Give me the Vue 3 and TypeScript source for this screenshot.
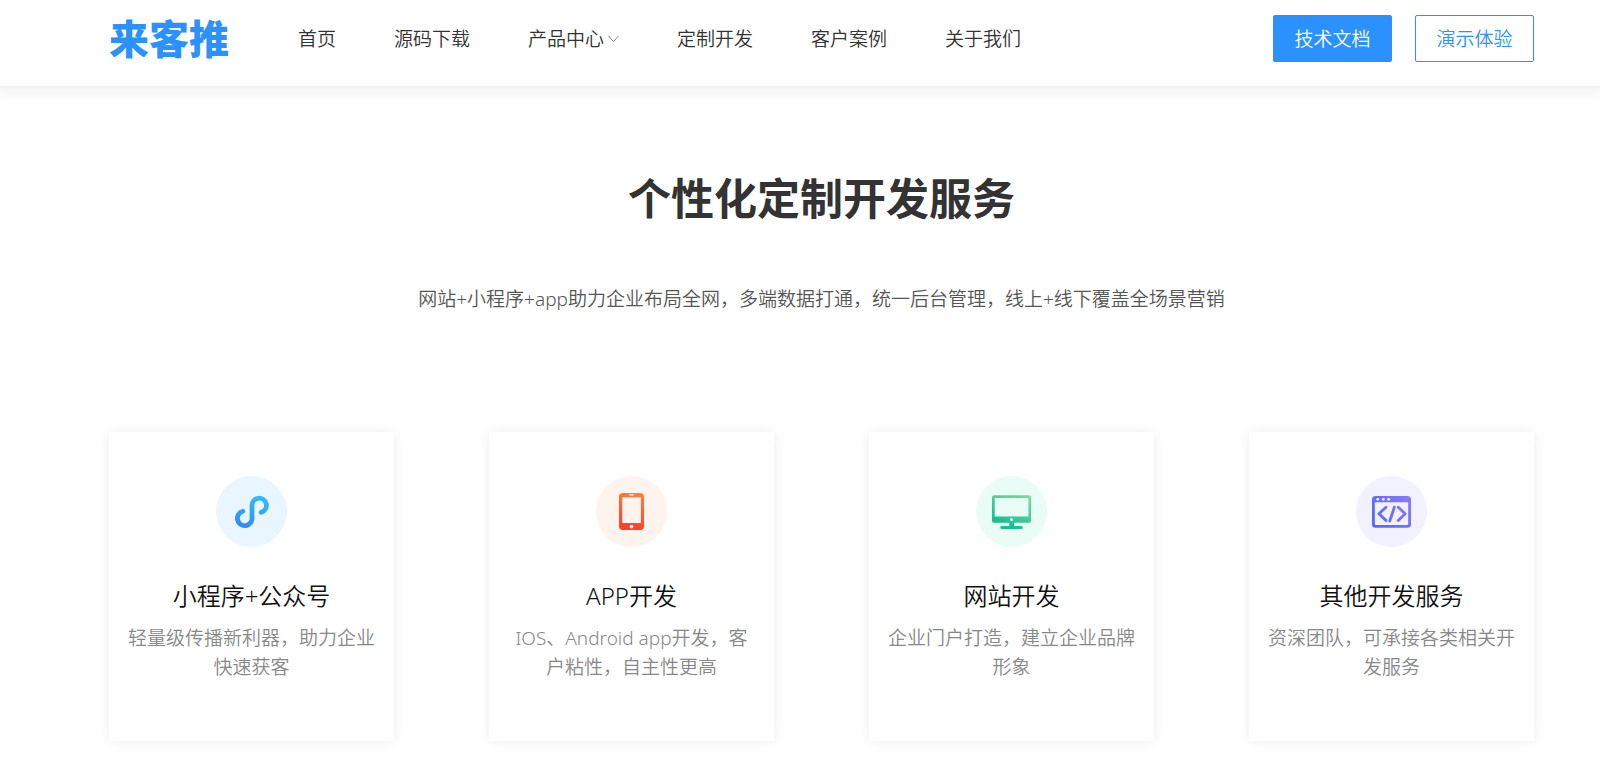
<script setup lang="ts">
interface NavItem {
  label: string
  hasMenu?: boolean
}

interface Service {
  icon: 'mini' | 'phone' | 'web' | 'code'
  title: string
  text: string
}

const navItems: NavItem[] = [
  { label: '首页' },
  { label: '源码下载' },
  { label: '产品中心', hasMenu: true },
  { label: '定制开发' },
  { label: '客户案例' },
  { label: '关于我们' },
]

const services: Service[] = [
  { icon: 'mini', title: '小程序+公众号', text: '轻量级传播新利器，助力企业快速获客' },
  { icon: 'phone', title: 'APP开发', text: 'IOS、Android app开发，客户粘性，自主性更高' },
  { icon: 'web', title: '网站开发', text: '企业门户打造，建立企业品牌形象' },
  { icon: 'code', title: '其他开发服务', text: '资深团队，可承接各类相关开发服务' },
]
</script>

<template>
  <div class="page">
    <header class="header">
      <a class="logo" href="#">来客推</a>
      <nav class="nav">
        <a v-for="item in navItems" :key="item.label" class="nav-link" href="#">
          {{ item.label }}
          <svg v-if="item.hasMenu" class="chevron" viewBox="0 0 11 8" aria-hidden="true">
            <path d="M0.4 0.8 L5.5 6.6 L10.6 0.8" fill="none" stroke="#888" stroke-width="1" />
          </svg>
        </a>
      </nav>
      <div class="actions">
        <button class="btn btn-solid" type="button">技术文档</button>
        <button class="btn btn-outline" type="button">演示体验</button>
      </div>
    </header>

    <main class="main">
      <h1 class="heading">个性化定制开发服务</h1>
      <p class="lead">网站+小程序+app助力企业布局全网，多端数据打通，统一后台管理，线上+线下覆盖全场景营销</p>

      <section class="cards">
        <article v-for="service in services" :key="service.title" class="card">
          <svg v-if="service.icon === 'mini'" class="icon" viewBox="0 0 71 71" aria-hidden="true">
            <defs>
              <linearGradient id="g-mini" gradientUnits="userSpaceOnUse" x1="40" y1="21" x2="32" y2="51">
                <stop offset="0" stop-color="#2fbcff" />
                <stop offset="1" stop-color="#3489ff" />
              </linearGradient>
            </defs>
            <circle cx="35.5" cy="35.5" r="35.5" fill="#e9f6ff" />
            <path
              d="M45.2 36.3 A7.2 7.2 0 1 0 36 30 V41.6 A7.3 7.3 0 1 1 26.8 35.3"
              fill="none"
              stroke="url(#g-mini)"
              stroke-width="4.8"
              stroke-linecap="round"
            />
          </svg>

          <svg v-else-if="service.icon === 'phone'" class="icon" viewBox="0 0 71 71" aria-hidden="true">
            <defs>
              <linearGradient id="g-phone" x1="0.6" y1="0" x2="0.4" y2="1">
                <stop offset="0" stop-color="#ff7d3c" />
                <stop offset="1" stop-color="#ff3d2b" />
              </linearGradient>
            </defs>
            <circle cx="35.5" cy="35.5" r="35.5" fill="#fff3ee" />
            <rect x="23" y="17" width="25" height="37" rx="4" fill="url(#g-phone)" />
            <rect x="26.2" y="21.3" width="18.7" height="25.8" rx="0.6" fill="#fff3ee" />
            <rect x="33.2" y="18.3" width="4.8" height="1.3" rx="0.6" fill="#fff3ee" />
            <circle cx="35.5" cy="50.6" r="1.9" fill="#fff3ee" />
          </svg>

          <svg v-else-if="service.icon === 'web'" class="icon" viewBox="0 0 71 71" aria-hidden="true">
            <defs>
              <linearGradient id="g-web" gradientUnits="userSpaceOnUse" x1="49" y1="17" x2="32" y2="50">
                <stop offset="0" stop-color="#7bdc9f" />
                <stop offset="1" stop-color="#17c091" />
              </linearGradient>
            </defs>
            <circle cx="35.5" cy="35.5" r="35.5" fill="#eafcf6" />
            <g fill="url(#g-web)">
              <rect x="16" y="19.2" width="39" height="27.6" rx="2.6" />
              <rect x="33.2" y="46" width="4.8" height="5" />
              <rect x="24.4" y="50" width="22.4" height="3" rx="1.3" />
            </g>
            <rect x="18.7" y="22" width="33.8" height="18.4" rx="0.5" fill="#eafcf6" />
            <circle cx="35.5" cy="43.4" r="1.5" fill="#eafcf6" />
          </svg>

          <svg v-else class="icon" viewBox="0 0 71 71" aria-hidden="true">
            <defs>
              <linearGradient id="g-code" gradientUnits="userSpaceOnUse" x1="54" y1="22" x2="18" y2="50">
                <stop offset="0" stop-color="#8b78ff" />
                <stop offset="1" stop-color="#5068ff" />
              </linearGradient>
            </defs>
            <circle cx="35.5" cy="35.5" r="35.5" fill="#f1f1ff" />
            <rect x="16" y="20" width="39" height="31.8" rx="3.6" fill="url(#g-code)" />
            <rect x="18.8" y="26.2" width="33.4" height="22.8" rx="1" fill="#f1f1ff" />
            <g fill="#f1f1ff">
              <circle cx="21.7" cy="23.3" r="1.4" />
              <circle cx="27.3" cy="23.3" r="1.4" />
              <circle cx="32.7" cy="23.3" r="1.4" />
            </g>
            <path
              d="M30 31.2 L22.9 37.8 L30 44.4 M38.4 31 L33.8 45 M42.2 31.2 L49.2 37.8 L42.2 44.4"
              fill="none"
              stroke="url(#g-code)"
              stroke-width="2.8"
              stroke-linecap="round"
              stroke-linejoin="round"
            />
          </svg>

          <h2 class="card-title">{{ service.title }}</h2>
          <p class="card-text">{{ service.text }}</p>
        </article>
      </section>
    </main>
  </div>
</template>

<style>
body {
  background: #fff;
}
</style>

<style scoped>
.page {
  font-family: "Noto Sans", "Noto Sans CJK SC", sans-serif;
  font-size: 19px;
  font-weight: 350;
  color: #333;
  overflow-x: hidden;
}

.header {
  display: flex;
  align-items: center;
  padding: 15px 66px 24px 109px;
  background: #fff;
  box-shadow: 0 -8px 16px 12px rgba(0, 0, 0, 0.07);
}

.logo {
  margin-bottom: 4px;
  font-family: "Noto Sans CJK SC", sans-serif;
  font-size: 40px;
  line-height: 40px;
  font-weight: 900;
  color: #2a91ff;
  text-decoration: none;
}

.nav {
  display: flex;
  flex: 1;
  gap: 58px;
  margin-left: 69px;
}

.nav-link {
  display: flex;
  align-items: center;
  gap: 4px;
  line-height: 28px;
  color: #333;
  text-decoration: none;
  white-space: nowrap;
}

.chevron {
  width: 11px;
  height: 8px;
}

.actions {
  display: flex;
  gap: 23px;
}

.btn {
  min-width: 119px;
  height: 47px;
  padding: 0 16px;
  border: 1px solid #2a91ff;
  border-radius: 2px;
  font: inherit;
  line-height: 28px;
  cursor: pointer;
}

.btn-solid {
  background: #2a91ff;
  color: #fff;
}

.btn-outline {
  background: #fff;
  color: #2a91ff;
}

.main {
  padding: 83px 66px 36px 109px;
  text-align: center;
}

.heading {
  margin: 0;
  font-size: 43px;
  line-height: 60px;
  font-weight: 700;
}

.lead {
  margin: 56px 0 0;
  line-height: 28px;
  color: #555;
}

.cards {
  display: grid;
  grid-template-columns: repeat(4, 1fr);
  gap: 95px;
  margin-top: 119px;
}

.card {
  padding: 44px 18px 59px;
  background: #fff;
  box-shadow: 0 0 12px rgba(0, 0, 0, 0.08);
}

.icon {
  display: block;
  width: 71px;
  height: 71px;
  margin: 0 auto;
}

.card-title {
  margin: 31px 0 0;
  font-size: 24px;
  line-height: 36px;
  font-weight: 350;
  color: #111;
}

.card-text {
  margin: 10px 0 0;
  line-height: 29px;
  color: #888;
}
</style>
